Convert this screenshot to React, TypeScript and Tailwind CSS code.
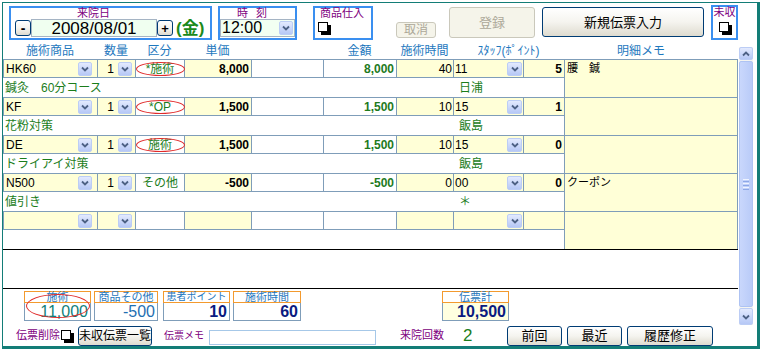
import React from "react";

type Rec = {
  code: string;
  qty: string;
  kubun: string;
  circle: boolean;
  price: string;
  amount: string;
  time: string;
  staff: string;
  point: string;
  memo: string;
  desc: string;
  staffName: string;
};

const records: Rec[] = [
  { code: "HK60", qty: "1", kubun: "*施術", circle: true, price: "8,000", amount: "8,000", time: "40", staff: "11", point: "5", memo: "腰　鍼", desc: "鍼灸　60分コース", staffName: "日浦" },
  { code: "KF", qty: "1", kubun: "*OP", circle: true, price: "1,500", amount: "1,500", time: "10", staff: "15", point: "1", memo: "", desc: "花粉対策", staffName: "飯島" },
  { code: "DE", qty: "1", kubun: "施術", circle: true, price: "1,500", amount: "1,500", time: "10", staff: "15", point: "0", memo: "", desc: "ドライアイ対策", staffName: "飯島" },
  { code: "N500", qty: "1", kubun: "その他", circle: false, price: "-500", amount: "-500", time: "0", staff: "00", point: "0", memo: "クーポン", desc: "値引き", staffName: "＊" },
  { code: "", qty: "", kubun: "", circle: false, price: "", amount: "", time: "", staff: "", point: "", memo: "", desc: "", staffName: "" },
];

function Chevron({ up = false }: { up?: boolean }) {
  return (
    <svg width="8" height="6" viewBox="0 0 8 6">
      <path
        d={up ? "M1 4.5 L4 1.5 L7 4.5" : "M1 1.5 L4 4.5 L7 1.5"}
        stroke="#4d6185"
        strokeWidth="1.8"
        fill="none"
      />
    </svg>
  );
}

function DropBtn({ extra = "" }: { extra?: string }) {
  return (
    <span
      className={
        "flex h-[14px] w-[14px] shrink-0 items-center justify-center rounded-[2px] border border-[#bccdf5] bg-linear-to-b from-[#e3eafe] to-[#b6c8f6] " +
        extra
      }
    >
      <Chevron />
    </span>
  );
}

function Check() {
  return (
    <span className="relative block h-[13px] w-[13px] shrink-0">
      <span className="absolute left-[3px] top-[3px] h-[10px] w-[10px] bg-black" />
      <span className="absolute left-0 top-0 h-[10px] w-[10px] border border-black bg-white" />
    </span>
  );
}

function XPButton({ children, extra }: { children: React.ReactNode; extra: string }) {
  return (
    <div
      className={
        "flex shrink-0 items-center justify-center whitespace-nowrap rounded-[3px] border border-[#003c74] bg-linear-to-b from-white via-[#f5f4ef] to-[#dedbcf] text-black leading-none " +
        extra
      }
    >
      {children}
    </div>
  );
}

function DisabledButton({ children, extra }: { children: React.ReactNode; extra: string }) {
  return (
    <div
      className={
        "flex shrink-0 items-center justify-center rounded-[3px] border border-[#cac8bb] bg-[#f5f4ea] text-[#aca899] leading-none " +
        extra
      }
    >
      {children}
    </div>
  );
}

const cellB = "flex h-full shrink-0 items-center border-l border-y border-[#7f9db9]";

function RecordRow({ r }: { r: Rec }) {
  return (
    <div className="flex h-[38px]">
      <div className="flex w-[561px] flex-col">
        <div className="flex h-[19px] text-[12px] leading-none">
          <div className={cellB + " w-[94px] bg-[#ffffd7] pl-[2px] text-black"}>
            <span className="flex-1">{r.code}</span>
            <DropBtn extra="mr-[5px]" />
          </div>
          <div className={cellB + " w-[38px] justify-end bg-[#ffffd7] text-black"}>
            <span className="mr-[4px]">{r.qty}</span>
            <DropBtn extra="mr-[3px]" />
          </div>
          <div className={cellB + " relative w-[49px] justify-center bg-white text-[#1b7d1b]"}>
            <span>{r.kubun}</span>
            {r.circle && (
              <span className="absolute left-0 top-[2px] h-[14px] w-[49px] rounded-[50%] border border-[#e02a2a]" />
            )}
          </div>
          <div className={cellB + " w-[67px] justify-end bg-[#ffffd7] pr-[2px] font-bold text-black"}>{r.price}</div>
          <div className={cellB + " w-[72px] bg-white"} />
          <div className={cellB + " w-[73px] justify-end bg-white pr-[2px] font-bold text-[#1e7a1e]"}>{r.amount}</div>
          <div className={cellB + " w-[57px] justify-end bg-[#ffffd7] pr-[1px] text-black"}>{r.time}</div>
          <div className={cellB + " w-[70px] bg-[#ffffd7] pl-[1px] text-black"}>
            <span className="flex-1">{r.staff}</span>
            <DropBtn extra="mr-[1px] w-[15px]" />
          </div>
          <div className={cellB + " w-[41px] justify-end bg-[#ffffd7] pr-[2px] font-bold text-black"}>{r.point}</div>
        </div>
        <div className="flex h-[19px] items-center text-[12px] leading-none text-[#1b7d1b]">
          <span className="w-[453px] pl-[2px]">{r.desc}</span>
          <span className="pl-[3px]">{r.staffName}</span>
        </div>
      </div>
      <div className="h-[38px] w-[174px] border-x border-t border-[#7f9db9] bg-[#ffffd7] pl-[2px] pt-[3px] text-[11px] leading-none text-black">
        {r.memo}
      </div>
    </div>
  );
}

function TotalBox({
  label,
  value,
  extra,
  valueCls,
  labelCls = "text-[11px]",
}: {
  label: string;
  value: string;
  extra: string;
  valueCls: string;
  labelCls?: string;
}) {
  return (
    <div className={"flex shrink-0 flex-col " + extra}>
      <div className={"flex h-[12px] items-center justify-center whitespace-nowrap border border-[#f39a2e] bg-white leading-none text-[#1f77bd] " + labelCls}>
        {label}
      </div>
      <div className={"flex h-[18px] items-center justify-end border-x border-b border-[#7f9db9] pr-[2px] text-[16px] leading-none " + valueCls}>
        {value}
      </div>
    </div>
  );
}

export default function App() {
  return (
    <div className="h-[351px] w-[762px] overflow-hidden bg-white font-['Liberation_Sans','Noto_Sans_CJK_JP',sans-serif]">
      <div className="ml-[2px] mt-[2px] flex h-[347px] w-[758px] flex-col border-b-[3px] border-l border-r-[3px] border-t border-[#137d77]">
        {/* Top bar */}
        <div className="flex h-[39px] items-start">
          {/* 来院日 */}
          <div className="ml-[6px] mt-[3px] flex h-[34px] w-[203px] shrink-0 flex-col border-2 border-[#3a8ff0]">
            <div className="ml-[66px] h-[11px] text-[11px] leading-[11px] text-[#800080]">来院日</div>
            <div className="flex h-[18px] items-center">
              <XPButton extra="ml-[4px] h-[16px] w-[16px] text-[14px] font-bold">-</XPButton>
              <div className="flex h-[18px] w-[126px] items-center justify-center border border-[#a5b4c4] bg-[#f0fff0] text-[17px] leading-none text-black">
                2008/08/01
              </div>
              <XPButton extra="h-[16px] w-[16px] text-[13px] font-bold">+</XPButton>
              <span className="ml-[3px] text-[17px] font-bold leading-none text-[#1b8a1b]">(金)</span>
            </div>
          </div>
          {/* 時刻 */}
          <div className="ml-[6px] mt-[3px] flex h-[34px] w-[79px] shrink-0 flex-col border-2 border-[#3a8ff0]">
            <div className="ml-[17px] flex h-[11px] text-[11px] leading-[11px] text-[#800080]">
              <span>時</span>
              <span className="ml-[8px]">刻</span>
            </div>
            <div className="flex h-[18px] items-center border border-[#a5b4c4] bg-[#f2fff2]">
              <span className="flex-1 pl-[1px] text-[16px] leading-none text-black">12:00</span>
              <DropBtn extra="mr-[1px]" />
            </div>
          </div>
          {/* 商品仕入 */}
          <div className="ml-[16px] mt-[3px] flex h-[34px] w-[60px] shrink-0 flex-col border-2 border-[#3a8ff0]">
            <div className="ml-[5px] h-[11px] whitespace-nowrap text-[11px] leading-[11px] text-[#800080]">商品仕入</div>
            <div className="ml-[3px] mt-[3px]">
              <Check />
            </div>
          </div>
          <DisabledButton extra="ml-[23px] mt-[19px] h-[16px] w-[40px] text-[12px]">取消</DisabledButton>
          <DisabledButton extra="ml-[13px] mt-[4px] h-[31px] w-[86px] text-[13px]">登録</DisabledButton>
          <XPButton extra="ml-[7px] mt-[4px] h-[30px] w-[162px] text-[13px]">新規伝票入力</XPButton>
          {/* 未収 */}
          <div className="ml-[7px] mt-[2px] flex h-[35px] w-[27px] shrink-0 flex-col items-center border-2 border-[#3a8ff0]">
            <div className="h-[12px] whitespace-nowrap text-[11px] leading-[11px] text-[#800080]">未収</div>
            <div className="ml-[1px] mt-[3px]">
              <Check />
            </div>
          </div>
        </div>

        {/* Main area */}
        <div className="flex h-[283px]">
          <div className="flex w-[735px] shrink-0 flex-col">
            {/* header */}
            <div className="flex h-[17px] items-center text-[12px] leading-none text-[#1e78be]">
              <span className="w-[94px] text-center">施術商品</span>
              <span className="w-[38px] text-center">数量</span>
              <span className="w-[49px] text-center">区分</span>
              <span className="w-[67px] text-center">単価</span>
              <span className="w-[72px]" />
              <span className="w-[73px] text-center">金額</span>
              <span className="w-[57px] text-center">施術時間</span>
              <span className="w-[111px] text-center">ｽﾀｯﾌ(ﾎﾟｲﾝﾄ)</span>
              <span className="w-[174px] pr-[20px] text-center">明細メモ</span>
            </div>
            {/* records */}
            <div className="flex flex-col">
              {records.map((r, i) => (
                <RecordRow key={i} r={r} />
              ))}
            </div>
            <div className="h-[39px] border-t border-black" />
            {/* totals */}
            <div className="flex h-[37px] items-start border-t border-black pt-[2px]">
              <div className="relative ml-[21px] shrink-0">
                <TotalBox label="施術" value="11,000" extra="w-[67px]" valueCls="text-[#0f7f7a] bg-white" />
                <span className="absolute left-[2px] top-[3px] h-[24px] w-[64px] rounded-[50%] border border-[#e02a2a]" />
              </div>
              <TotalBox label="商品その他" value="-500" extra="ml-[3px] w-[64px]" valueCls="text-[#1f6fb2] bg-white" />
              <TotalBox label="患者ポイント" value="10" extra="ml-[5px] w-[67px]" valueCls="text-[#0a1a80] font-bold bg-white" labelCls="text-[10px]" />
              <TotalBox label="施術時間" value="60" extra="ml-[3px] w-[68px]" valueCls="text-[#0a1a80] font-bold bg-white" />
              <TotalBox label="伝票計" value="10,500" extra="ml-[141px] w-[67px]" valueCls="text-[#0a1a80] font-bold bg-[#ffffe0]" />
            </div>
          </div>
          {/* scrollbar */}
          <div className="ml-[1px] mt-[5px] flex h-[278px] w-[14px] shrink-0 flex-col bg-[#f4f4f0]">
            <div className="flex h-[13px] items-center justify-center rounded-[2px] border border-[#bccdf5] bg-linear-to-b from-[#e3eafe] to-[#b6c8f6]">
              <Chevron up />
            </div>
            <div className="mt-[1px] flex flex-1 flex-col items-center justify-center gap-[1px] rounded-[2px] border border-[#aec3f3] bg-linear-to-r from-[#c9d7fc] to-[#b9cbf8]">
              <span className="h-[1px] w-[6px] bg-[#eef3ff]" />
              <span className="h-[1px] w-[6px] bg-[#8ea8e6]" />
              <span className="h-[1px] w-[6px] bg-[#eef3ff]" />
              <span className="h-[1px] w-[6px] bg-[#8ea8e6]" />
              <span className="h-[1px] w-[6px] bg-[#eef3ff]" />
              <span className="h-[1px] w-[6px] bg-[#8ea8e6]" />
            </div>
            <div className="mt-[1px] flex h-[17px] items-center justify-center rounded-[2px] border border-[#bccdf5] bg-linear-to-b from-[#e3eafe] to-[#b6c8f6]">
              <Chevron />
            </div>
          </div>
        </div>

        {/* Bottom row */}
        <div className="flex h-[21px] items-center">
          <span className="ml-[13px] w-[45px] shrink-0 whitespace-nowrap text-[11px] leading-none text-[#800080]">伝票削除</span>
          <div className="mt-[2px] shrink-0">
            <Check />
          </div>
          <XPButton extra="ml-[4px] h-[20px] w-[74px] text-[12px]">未収伝票一覧</XPButton>
          <span className="ml-[12px] w-[45px] shrink-0 whitespace-nowrap text-[10px] leading-none text-[#800080]">伝票メモ</span>
          <div className="mt-[3px] h-[15px] w-[167px] shrink-0 border border-[#a6c8e8] bg-white" />
          <span className="ml-[24px] w-[46px] shrink-0 whitespace-nowrap text-[11px] leading-none text-[#800080]">来院回数</span>
          <span className="ml-[17px] w-[10px] shrink-0 text-[17px] leading-none text-[#1b7d1b]">2</span>
          <XPButton extra="ml-[34px] h-[20px] w-[55px] text-[13px]">前回</XPButton>
          <XPButton extra="ml-[5px] h-[20px] w-[55px] text-[13px]">最近</XPButton>
          <XPButton extra="ml-[5px] h-[20px] w-[86px] text-[13px]">履歴修正</XPButton>
        </div>
      </div>
    </div>
  );
}
